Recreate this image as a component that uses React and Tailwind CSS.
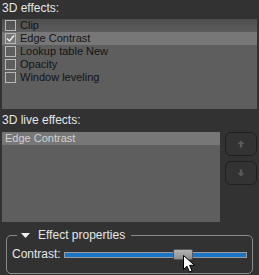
const effects = [
  { name: 'Clip', checked: false },
  { name: 'Edge Contrast', checked: true, selected: true },
  { name: 'Lookup table New', checked: false },
  { name: 'Opacity', checked: false },
  { name: 'Window leveling', checked: false },
];

function CheckBox({ checked }) {
  return (
    <div className="w-[11px] h-[11px] border border-[#b8b8b8] flex items-center justify-center shrink-0">
      {checked && (
        <svg width="9" height="9" viewBox="0 0 9 9">
          <path d="M1 4.5 L3.5 7 L8 1.5" fill="none" stroke="#f0f0f0" strokeWidth="1.4" />
        </svg>
      )}
    </div>
  );
}

function ArrowButton({ down }) {
  return (
    <button className="w-[32px] h-[24px] rounded-[6px] border border-[#1f1f1f] bg-[#333333] flex items-center justify-center">
      <svg width="8" height="8" viewBox="0 0 8 8" className={down ? 'rotate-180' : ''}>
        <path d="M4 0.5 L7.5 4 L5.2 4 L5.2 7.5 L2.8 7.5 L2.8 4 L0.5 4 Z" fill="#5a5a5a" />
      </svg>
    </button>
  );
}

export default function App() {
  return (
    <div className="w-[259px] h-[275px] bg-[#323232] px-[2px] text-[11px] leading-[13px] font-['Liberation_Sans',Arial,sans-serif] overflow-hidden relative select-none">
      {/* 3D effects */}
      <div className="h-[19px] pt-[2px] text-[#e6e6e6] text-[12px]">3D effects:</div>
      <div className="h-[90px] w-[255px] bg-[#5e5e5e]">
        {effects.map((e, i) => (
          <div
            key={i}
            className={`h-[13px] flex items-center gap-[4px] pl-[3px] text-[#141414] ${
              e.selected ? 'bg-[#777777]' : i === 0 ? 'bg-gradient-to-b from-[#4f4f4f] to-[#5c5c5c]' : ''
            }`}
          >
            <CheckBox checked={e.checked} />
            <span>{e.name}</span>
          </div>
        ))}
      </div>

      {/* 3D live effects */}
      <div className="h-[23px] pt-[5px] text-[#e6e6e6] text-[12px]">3D live effects:</div>
      <div className="flex gap-[5px]">
        <div className="w-[218px] h-[90px] bg-[#5e5e5e]">
          <div className="h-[13px] bg-[#777777] pl-[3px] text-[#d0d0d0] flex items-center">Edge Contrast</div>
        </div>
        <div className="flex flex-col gap-[5px]">
          <ArrowButton />
          <ArrowButton down />
        </div>
      </div>

      {/* Effect properties */}
      <fieldset className="mt-[7px] ml-[4px] w-[247px] h-[45px] border border-[#8a8a8a] rounded-[5px] px-[5px]">
        <legend className="ml-[5px] px-[4px] flex items-center gap-[8px] text-[#e6e6e6] text-[12px] leading-[12px]">
          <svg width="9" height="5" viewBox="0 0 9 5">
            <path d="M0 0 L9 0 L4.5 5 Z" fill="#f2f2f2" />
          </svg>
          <span className="pr-[2px]">Effect properties</span>
        </legend>
        <div className="flex items-center gap-[3px] mt-[7px]">
          <span className="text-[#e6e6e6] text-[12px]">Contrast:</span>
          <div className="relative flex-1 h-[12px] flex items-center">
            <div className="w-full h-[6px] bg-[#1b76c8] border border-[#9a9a9a]" />
            <div className="absolute left-[109px] top-[0px] w-[20px] h-[11px] rounded-[2px] border border-[#5a5a5a] bg-gradient-to-b from-[#b4b4b4] to-[#8e8e8e]" />
          </div>
        </div>
      </fieldset>

      {/* mouse cursor */}
      <svg className="absolute left-[183px] top-[255px]" width="13" height="19" viewBox="0 0 13 19">
        <path d="M0.5 0.5 L0.5 14.5 L4 11.2 L6.5 17 L9 16 L6.6 10.3 L11.5 10.3 Z" fill="#ffffff" stroke="#000000" strokeWidth="1" strokeLinejoin="round" />
      </svg>
    </div>
  );
}
